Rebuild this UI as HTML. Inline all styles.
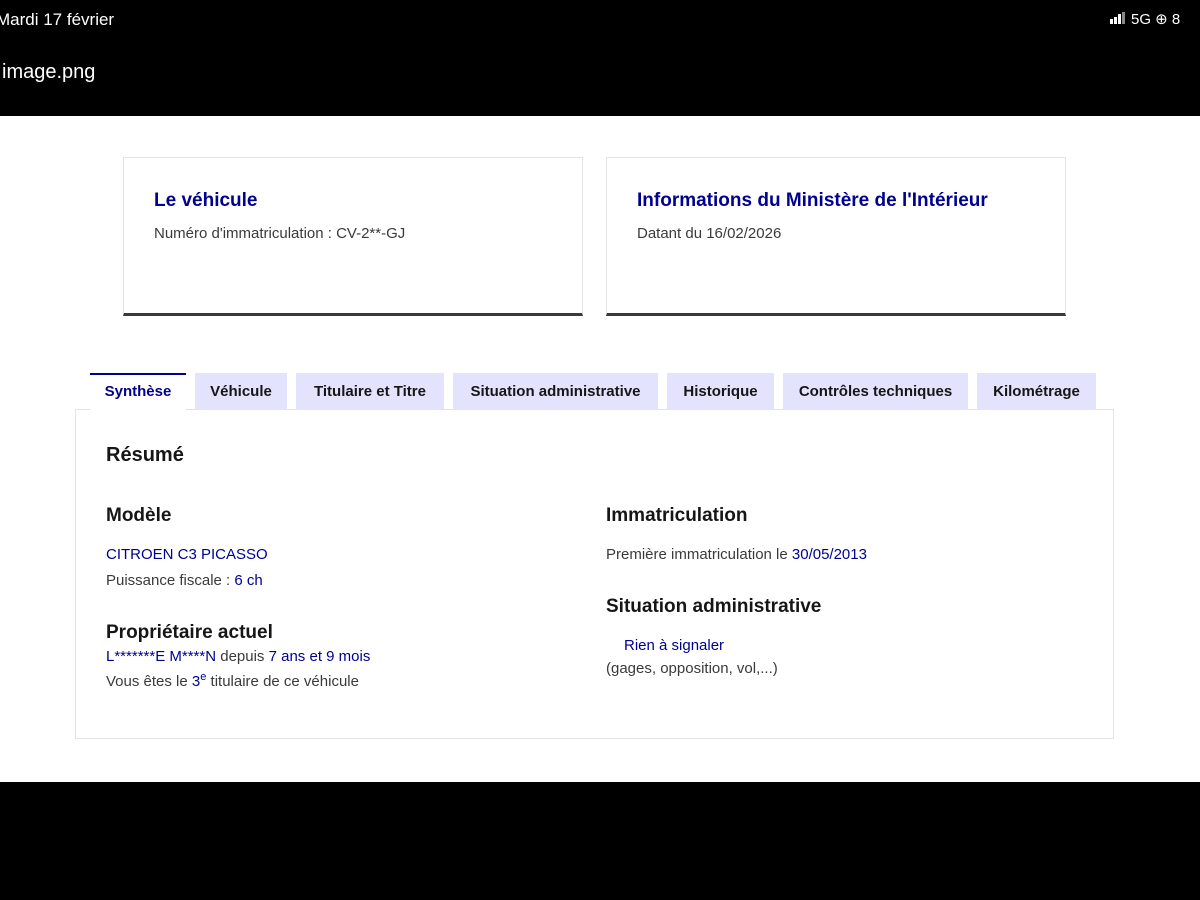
<!DOCTYPE html>
<html><head><meta charset="utf-8"><style>
*{margin:0;padding:0;box-sizing:border-box}
body{width:1200px;height:900px;background:#000;position:relative;overflow:hidden;font-family:"Liberation Sans","DejaVu Sans",sans-serif}
.a{position:absolute;white-space:nowrap}
.w{background:#fff;left:0;top:116px;width:1200px;height:666px}
.card{background:#fff;border:1px solid #e3e3e3;border-bottom:3px solid #3a3a3a;top:157px;height:159px;width:460px}
.t{color:#000091;font-weight:bold;font-size:19px}
.g{color:#3a3a3a;font-size:15px}
.tab{top:373px;height:37px;background:#e3e3fd;color:#161616;font-weight:bold;font-size:15px;text-align:center;line-height:37px}
.b{color:#000091}
.h{color:#161616;font-weight:bold;font-size:19px}
</style></head><body>
<div class="a" style="left:-4px;top:10px;color:#fff;font-size:17px">Mardi 17 février</div>
<div class="a" style="left:1110px;top:10px;color:#fff;font-size:15px"><span style="display:inline-block;width:3px;height:5px;background:#fff;margin-right:1px"></span><span style="display:inline-block;width:3px;height:7px;background:#fff;margin-right:1px"></span><span style="display:inline-block;width:3px;height:10px;background:#fff;margin-right:1px"></span><span style="display:inline-block;width:3px;height:12px;background:#888;margin-right:6px"></span>5G ⊕ 8</div>
<div class="a" style="left:2px;top:61px;color:#fff;font-size:20px">image.png</div>
<div class="a w"></div>
<div class="a card" style="left:123px"></div>
<div class="a card" style="left:606px"></div>
<div class="a t" style="left:154px;top:190px">Le véhicule</div>
<div class="a g" style="left:154px;top:225px">Numéro d'immatriculation : CV-2**-GJ</div>
<div class="a t" style="left:637px;top:190px">Informations du Ministère de l'Intérieur</div>
<div class="a g" style="left:637px;top:225px">Datant du 16/02/2026</div>
<div class="a" style="left:75px;top:409px;width:1039px;height:330px;border:1px solid #e3e3e3;background:#fff"></div>
<div class="a tab" style="left:90px;width:96px;background:#fff;color:#000091;border-top:2px solid #000091;height:38px;line-height:34px">Synthèse</div>
<div class="a tab" style="left:195px;width:92px">Véhicule</div>
<div class="a tab" style="left:296px;width:148px">Titulaire et Titre</div>
<div class="a tab" style="left:453px;width:205px">Situation administrative</div>
<div class="a tab" style="left:667px;width:107px">Historique</div>
<div class="a tab" style="left:783px;width:185px">Contrôles techniques</div>
<div class="a tab" style="left:977px;width:119px">Kilométrage</div>
<div class="a h" style="left:106px;top:444px;font-size:20px">Résumé</div>
<div class="a h" style="left:106px;top:505px">Modèle</div>
<div class="a b" style="left:106px;top:546px;font-size:15px">CITROEN C3 PICASSO</div>
<div class="a g" style="left:106px;top:572px">Puissance fiscale : <span class="b">6 ch</span></div>
<div class="a h" style="left:106px;top:622px">Propriétaire actuel</div>
<div class="a g" style="left:106px;top:648px"><span class="b">L*******E M****N</span> depuis <span class="b">7 ans et 9 mois</span></div>
<div class="a g" style="left:106px;top:671px">Vous êtes le <span class="b">3<sup style="font-size:11px">e</sup></span> titulaire de ce véhicule</div>
<div class="a h" style="left:606px;top:505px">Immatriculation</div>
<div class="a g" style="left:606px;top:546px">Première immatriculation le <span class="b">30/05/2013</span></div>
<div class="a h" style="left:606px;top:596px">Situation administrative</div>
<div class="a b" style="left:624px;top:637px;font-size:15px">Rien à signaler</div>
<div class="a g" style="left:606px;top:660px">(gages, opposition, vol,...)</div>
</body></html>
